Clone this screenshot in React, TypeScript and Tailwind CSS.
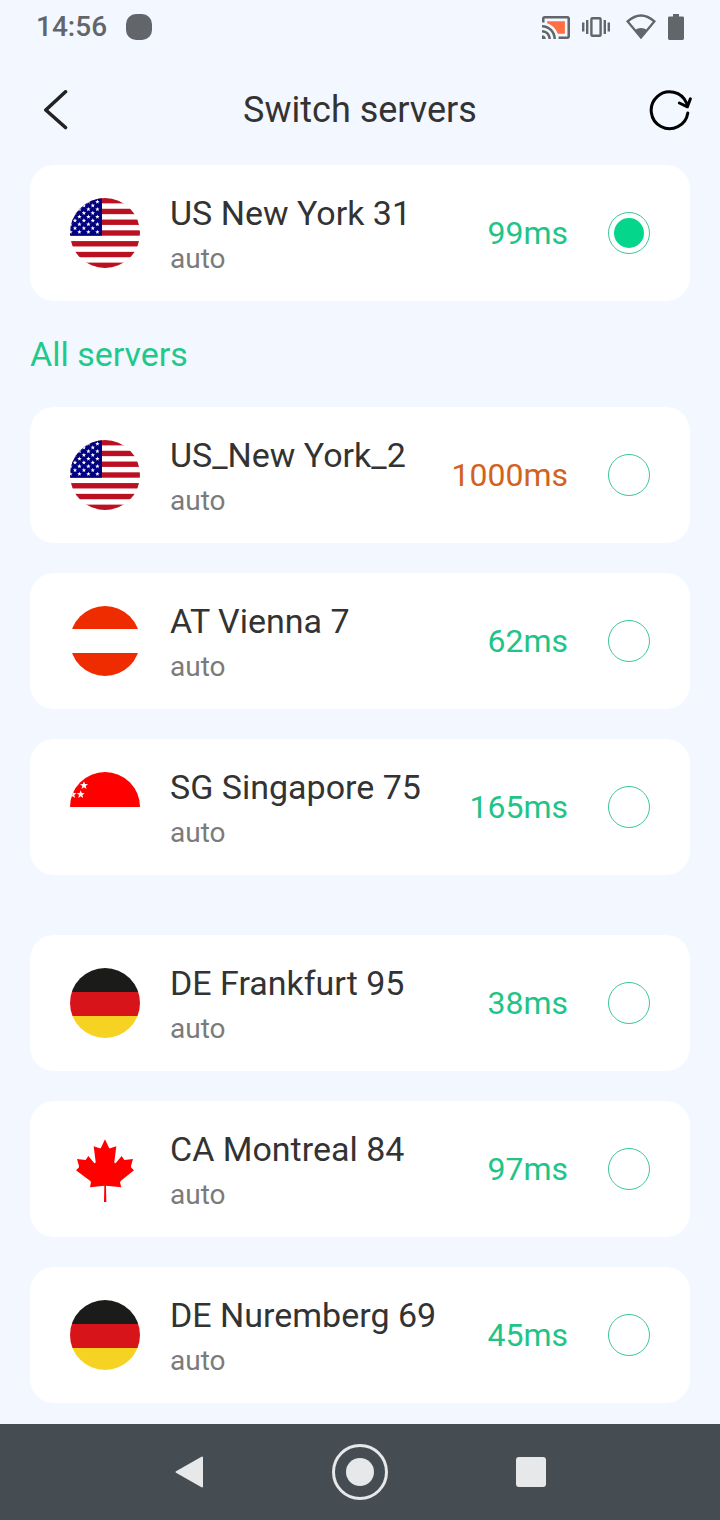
import { useState } from "react"

type Country = "us" | "at" | "sg" | "de" | "ca"

type Server = {
  id: string
  country: Country
  name: string
  mode: string
  ping: number
}

const current: Server = { id: "us-31", country: "us", name: "US New York 31", mode: "auto", ping: 99 }

const serverGroups: Server[][] = [
  [
    { id: "us-2", country: "us", name: "US_New York_2", mode: "auto", ping: 1000 },
    { id: "at-7", country: "at", name: "AT Vienna 7", mode: "auto", ping: 62 },
    { id: "sg-75", country: "sg", name: "SG Singapore 75", mode: "auto", ping: 165 },
  ],
  [
    { id: "de-95", country: "de", name: "DE Frankfurt 95", mode: "auto", ping: 38 },
    { id: "ca-84", country: "ca", name: "CA Montreal 84", mode: "auto", ping: 97 },
    { id: "de-69", country: "de", name: "DE Nuremberg 69", mode: "auto", ping: 45 },
  ],
]

const Star = ({ x, y, r }: { x: number; y: number; r: number }) => {
  const points = []
  for (let i = 0; i < 10; i++) {
    const radius = i % 2 === 0 ? r : r * 0.42
    const angle = (Math.PI / 5) * i - Math.PI / 2
    points.push(`${x + radius * Math.cos(angle)},${y + radius * Math.sin(angle)}`)
  }
  return <polygon points={points.join(" ")} fill="#fff" />
}

const UsFlag = () => {
  const stripe = 70 / 13
  const rows = [1, 2, 3, 4, 5, 6, 7, 8, 9]
  return (
    <>
      <rect width="70" height="70" fill="#fff" />
      {[0, 2, 4, 6, 8, 10, 12].map((i) => (
        <rect key={i} y={i * stripe} width="70" height={stripe} fill="#bb1022" />
      ))}
      <rect width="32" height={stripe * 7} fill="#000080" />
      {rows.map((row) =>
        (row % 2 === 1 ? [0.5, 9.4, 18.4, 27.4] : [5, 13.9, 22.8]).map((x) => (
          <Star key={`${row}-${x}`} x={x} y={row * 3.77} r={2.3} />
        ))
      )}
    </>
  )
}

const flags: Record<Country, React.ReactNode> = {
  us: <UsFlag />,
  at: (
    <>
      <rect width="70" height="23" fill="#ef2b00" />
      <rect y="47" width="70" height="23" fill="#ef2b00" />
    </>
  ),
  sg: (
    <>
      <rect width="70" height="35" fill="#fe0000" />
      <Star x={14} y={13.5} r={4.2} />
      <Star x={10.7} y={22.5} r={4.2} />
      <Star x={2.6} y={22.5} r={4.2} />
    </>
  ),
  de: (
    <>
      <rect width="70" height="24" fill="#1b1b19" />
      <rect y="24" width="70" height="24" fill="#d7141a" />
      <rect y="48" width="70" height="22" fill="#f6d323" />
    </>
  ),
  ca: (
    <path
      transform="scale(0.3333)"
      fill="#fe0000"
      d="M105 16L117 41Q119 44 123 42L139 37L133 84Q134 90 138 86L155 66L163 78L189 75L183 96Q182 99 185 102L192 109L152 141Q149 144 151 149L154 160L108 155L109 204L102 204L103 155L60 160L62 149Q64 144 61 141L18 109L25 102Q28 99 27 96L21 75L47 78L55 66L72 86Q76 90 77 84L71 37L87 42Q91 44 93 41Z"
    />
  ),
}

const Flag = ({ country }: { country: Country }) => (
  <svg viewBox="0 0 70 70" className="size-[70px] shrink-0 rounded-full" aria-hidden="true">
    {flags[country]}
  </svg>
)

const StatusBar = () => (
  <div className="flex h-[54px] items-center justify-between px-9 text-[#626569]">
    <div className="flex items-center gap-[19px]">
      <span className="text-[28px] font-medium leading-8">14:56</span>
      <span className="size-[26px] rounded-[10px] bg-[#626569]" />
    </div>
    <div className="flex items-center gap-3">
      <svg viewBox="1 3 22 18" className="h-[23px] w-7" fill="currentColor" aria-hidden="true">
        <path
          fill="#ff6f43"
          d="M19 7H5v1.63c3.96 1.28 7.09 4.41 8.37 8.37H19V7z"
        />
        <path d="M1 18v3h3c0-1.66-1.34-3-3-3zm0-4v2c2.76 0 5 2.24 5 5h2c0-3.87-3.13-7-7-7zm0-4v2c4.97 0 9 4.03 9 9h2c0-6.08-4.93-11-11-11zm20-7H3c-1.1 0-2 .9-2 2v3h2V5h18v14h-7v2h7c1.1 0 2-.9 2-2V5c0-1.1-.9-2-2-2z" />
      </svg>
      <svg viewBox="0 0 28 20" className="h-5 w-7" fill="currentColor" aria-hidden="true">
        <rect x="0" y="5.5" width="2.4" height="9" />
        <rect x="4" y="3" width="2.4" height="14" />
        <rect x="9.4" y="1.2" width="9.2" height="17.6" rx="1" fill="none" stroke="currentColor" strokeWidth="2.4" />
        <rect x="21.6" y="3" width="2.4" height="14" />
        <rect x="25.6" y="5.5" width="2.4" height="9" />
      </svg>
      <svg viewBox="0 0 30 26" className="ml-1 h-[26px] w-[30px]" aria-hidden="true">
        <path d="M1.6 7.4Q15 -4.6 28.4 7.4L15 23.4Z" fill="none" stroke="currentColor" strokeWidth="2.4" />
        <path d="M8.6 16.2Q15 11.8 21.4 16.2L15 24.5Z" fill="currentColor" />
      </svg>
      <svg viewBox="0 0 16 26" className="h-[26px] w-4" fill="currentColor" aria-hidden="true">
        <path d="M5 0h6v2.4h3.6q1.4 0 1.4 1.4v20.8q0 1.4-1.4 1.4H1.4Q0 26 0 24.6V3.8q0-1.4 1.4-1.4H5z" />
      </svg>
    </div>
  </div>
)

type CardProps = {
  server: Server
  selected: string
  onSelect: (id: string) => void
}

const ServerCard = ({ server, selected, onSelect }: CardProps) => (
  <label className="flex h-[136px] cursor-pointer items-center rounded-3xl bg-white px-10">
    <Flag country={server.country} />
    <span className="ml-[30px] flex min-w-0 flex-1 flex-col gap-2 pt-1">
      <span className="truncate text-[34px] leading-10 text-[#333]">{server.name}</span>
      <span className="text-[28px] leading-9 text-[#7b7b7b]">{server.mode}</span>
    </span>
    <span className={server.ping >= 1000 ? "text-[32px] leading-10 text-[#d2621c]" : "text-[32px] leading-10 text-[#1fc486]"}>
      {server.ping}ms
    </span>
    <input
      type="radio"
      name="server"
      value={server.id}
      checked={selected === server.id}
      onChange={() => onSelect(server.id)}
      className="ml-10 size-[42px] shrink-0 appearance-none rounded-full border border-[#3cc79a] bg-clip-content p-[5px] checked:bg-[#04d78b]"
    />
  </label>
)

const NavigationBar = () => (
  <nav className="flex h-24 items-center justify-center gap-[115px] bg-[#454d52] text-[#e6e8ea]">
    <button type="button" aria-label="Back" className="flex size-14 items-center justify-center">
      <svg viewBox="0 0 28 32" className="h-8 w-7" aria-hidden="true">
        <path d="M1.5 16L27 1.5V30.5Z" fill="currentColor" stroke="currentColor" strokeWidth="2" strokeLinejoin="round" />
      </svg>
    </button>
    <button
      type="button"
      aria-label="Home"
      className="flex size-14 items-center justify-center rounded-full border-3 border-current"
    >
      <span className="size-7 rounded-full bg-current" />
    </button>
    <button type="button" aria-label="Recent apps" className="flex size-14 items-center justify-center">
      <span className="size-[30px] rounded-[3px] bg-current" />
    </button>
  </nav>
)

const App: React.FC = () => {
  const [selected, setSelected] = useState(current.id)

  return (
    <div className="flex min-h-screen flex-col bg-[#f3f7ff] font-[Roboto,sans-serif]">
      <StatusBar />
      <header className="flex h-[111px] items-center justify-between px-7">
        <button type="button" aria-label="Go back" className="flex size-14 items-center justify-center">
          <svg viewBox="0 0 24 40" className="h-10 w-6" aria-hidden="true">
            <path
              d="M21.5 1.8L1.8 20L21.5 37.5"
              fill="none"
              stroke="#222"
              strokeWidth="3.6"
              strokeLinecap="round"
              strokeLinejoin="round"
            />
          </svg>
        </button>
        <h1 className="text-[36px] leading-10 text-[#333]">Switch servers</h1>
        <button type="button" aria-label="Refresh" className="flex w-14 justify-end">
          <svg viewBox="0 0 43 42" className="h-[42px] w-[43px]" aria-hidden="true">
            <g fill="none" stroke="#000" strokeWidth="3" strokeLinecap="round" strokeLinejoin="round">
              <path d="M38.8 24A18.4 18.4 0 1 1 37.6 14.2L38.4 17" />
              <path d="M30.4 14L38.4 17.8L41.4 9.8" />
            </g>
          </svg>
        </button>
      </header>
      <main className="flex-1 px-[30px] pb-5">
        <ServerCard server={current} selected={selected} onSelect={setSelected} />
        <h2 className="py-8 text-[34px] leading-[42px] text-[#1fc98b]">All servers</h2>
        <div className="flex flex-col gap-[60px]">
          {serverGroups.map((group, index) => (
            <ul key={index} className="flex flex-col gap-[30px]">
              {group.map((server) => (
                <li key={server.id}>
                  <ServerCard server={server} selected={selected} onSelect={setSelected} />
                </li>
              ))}
            </ul>
          ))}
        </div>
      </main>
      <NavigationBar />
    </div>
  )
}

export default App
